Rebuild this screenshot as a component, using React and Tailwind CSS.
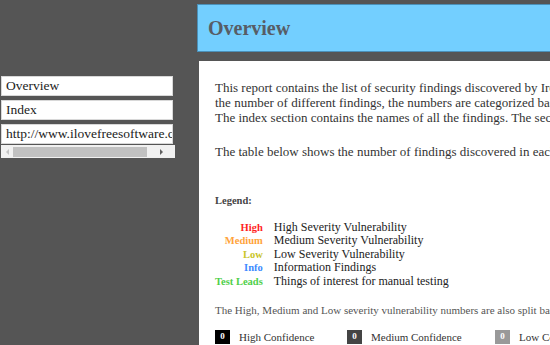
import React from 'react';

const serif = { fontFamily: '"Liberation Serif", "DejaVu Serif", serif' };

const legend = [
  { label: 'High', color: 'text-[#ff1f1f]', text: 'High Severity Vulnerability' },
  { label: 'Medium', color: 'text-[#ffa33a]', text: 'Medium Severity Vulnerability' },
  { label: 'Low', color: 'text-[#c9c52a]', text: 'Low Severity Vulnerability' },
  { label: 'Info', color: 'text-[#3d8bff]', text: 'Information Findings' },
  { label: 'Test Leads', color: 'text-[#4fcf4a]', text: 'Things of interest for manual testing' },
];

const confidence = [
  { box: 'bg-black', label: 'High Confidence', w: 'w-[132px]' },
  { box: 'bg-[#444444]', label: 'Medium Confidence', w: 'w-[148px]' },
  { box: 'bg-[#999999]', label: 'Low Confidence', w: 'w-[148px]' },
];

export default function App() {
  return (
    <div className="flex h-[345px] w-[550px] overflow-hidden bg-[#555555]" style={serif}>
      {/* Left navigation */}
      <div className="w-[197px] shrink-0 pt-[76px] pl-px">
        <div className="w-[174px]">
          <div className="flex flex-col gap-[4px]">
            <div className="h-[20px] w-[172px] border border-[#d8d8d8] bg-white px-[4px] text-[13.5px] leading-[18px] text-[#222]">Overview</div>
            <div className="h-[20px] w-[172px] border border-[#d8d8d8] bg-white px-[4px] text-[13.5px] leading-[18px] text-[#222]">Index</div>
            <div className="h-[20px] w-[172px] overflow-hidden whitespace-nowrap border border-[#d8d8d8] bg-white px-[4px] text-[13.5px] leading-[18px] text-[#222]">
              http://www.ilovefreesoftware.com/
            </div>
          </div>
          {/* horizontal scrollbar */}
          <div className="mt-px flex h-[13px] w-[174px] items-center bg-[#f1f1f1]">
            <div className="flex w-[12px] justify-center">
              <div className="h-0 w-0 border-y-[3px] border-r-[3px] border-y-transparent border-r-[#c4c4c4]" />
            </div>
            <div className="h-[10px] w-[134px] bg-[#c1c1c1]" />
            <div className="flex flex-1 justify-center">
              <div className="h-0 w-0 border-y-[3px] border-l-[3px] border-y-transparent border-l-[#606060]" />
            </div>
          </div>
        </div>
      </div>

      {/* Main */}
      <div className="flex min-w-0 flex-1 flex-col pt-[4px]">
        <div className="flex h-[48px] items-center border-b border-l border-t border-[#4b90b8] bg-[#73cfff] pl-[10px]">
          <h1 className="text-[20px] font-bold text-[#575d66]">Overview</h1>
        </div>
        <div className="mt-[9px] ml-[2px] flex-1 overflow-hidden whitespace-nowrap bg-white pl-[16px] pt-[19px] text-[#333]">
          <div className="text-[13px] leading-[15px]">
            <div>This report contains the list of security findings discovered by IronWASP during the scan.</div>
            <div>the number of different findings, the numbers are categorized based on severity and confidence.</div>
            <div>The index section contains the names of all the findings. The section below it contains details.</div>
            <div className="mt-[19px]">The table below shows the number of findings discovered in each category.</div>
          </div>

          <div className="mt-[34px] text-[10.5px] font-bold text-[#444]">Legend:</div>

          <div className="mt-[12px] grid grid-cols-[auto_1fr] gap-x-[11px] leading-[13.5px]">
            {legend.map((l) => (
              <React.Fragment key={l.label}>
                <div className={`text-right text-[10.5px] font-bold ${l.color}`}>{l.label}</div>
                <div className="text-[12px] text-[#222]">{l.text}</div>
              </React.Fragment>
            ))}
          </div>

          <div className="mt-[14px] text-[11px] text-[#555]">
            The High, Medium and Low severity vulnerability numbers are also split based on the confidence level.
          </div>

          <div className="mt-[10px] flex text-[11px] text-[#333]">
            {confidence.map((c) => (
              <div key={c.label} className={`flex shrink-0 items-center gap-[9px] ${c.w}`}>
                <div className={`flex h-[14px] w-[15px] items-center justify-center text-[9px] font-bold text-white ${c.box}`}>0</div>
                <div>{c.label}</div>
              </div>
            ))}
          </div>
        </div>
      </div>
    </div>
  );
}
